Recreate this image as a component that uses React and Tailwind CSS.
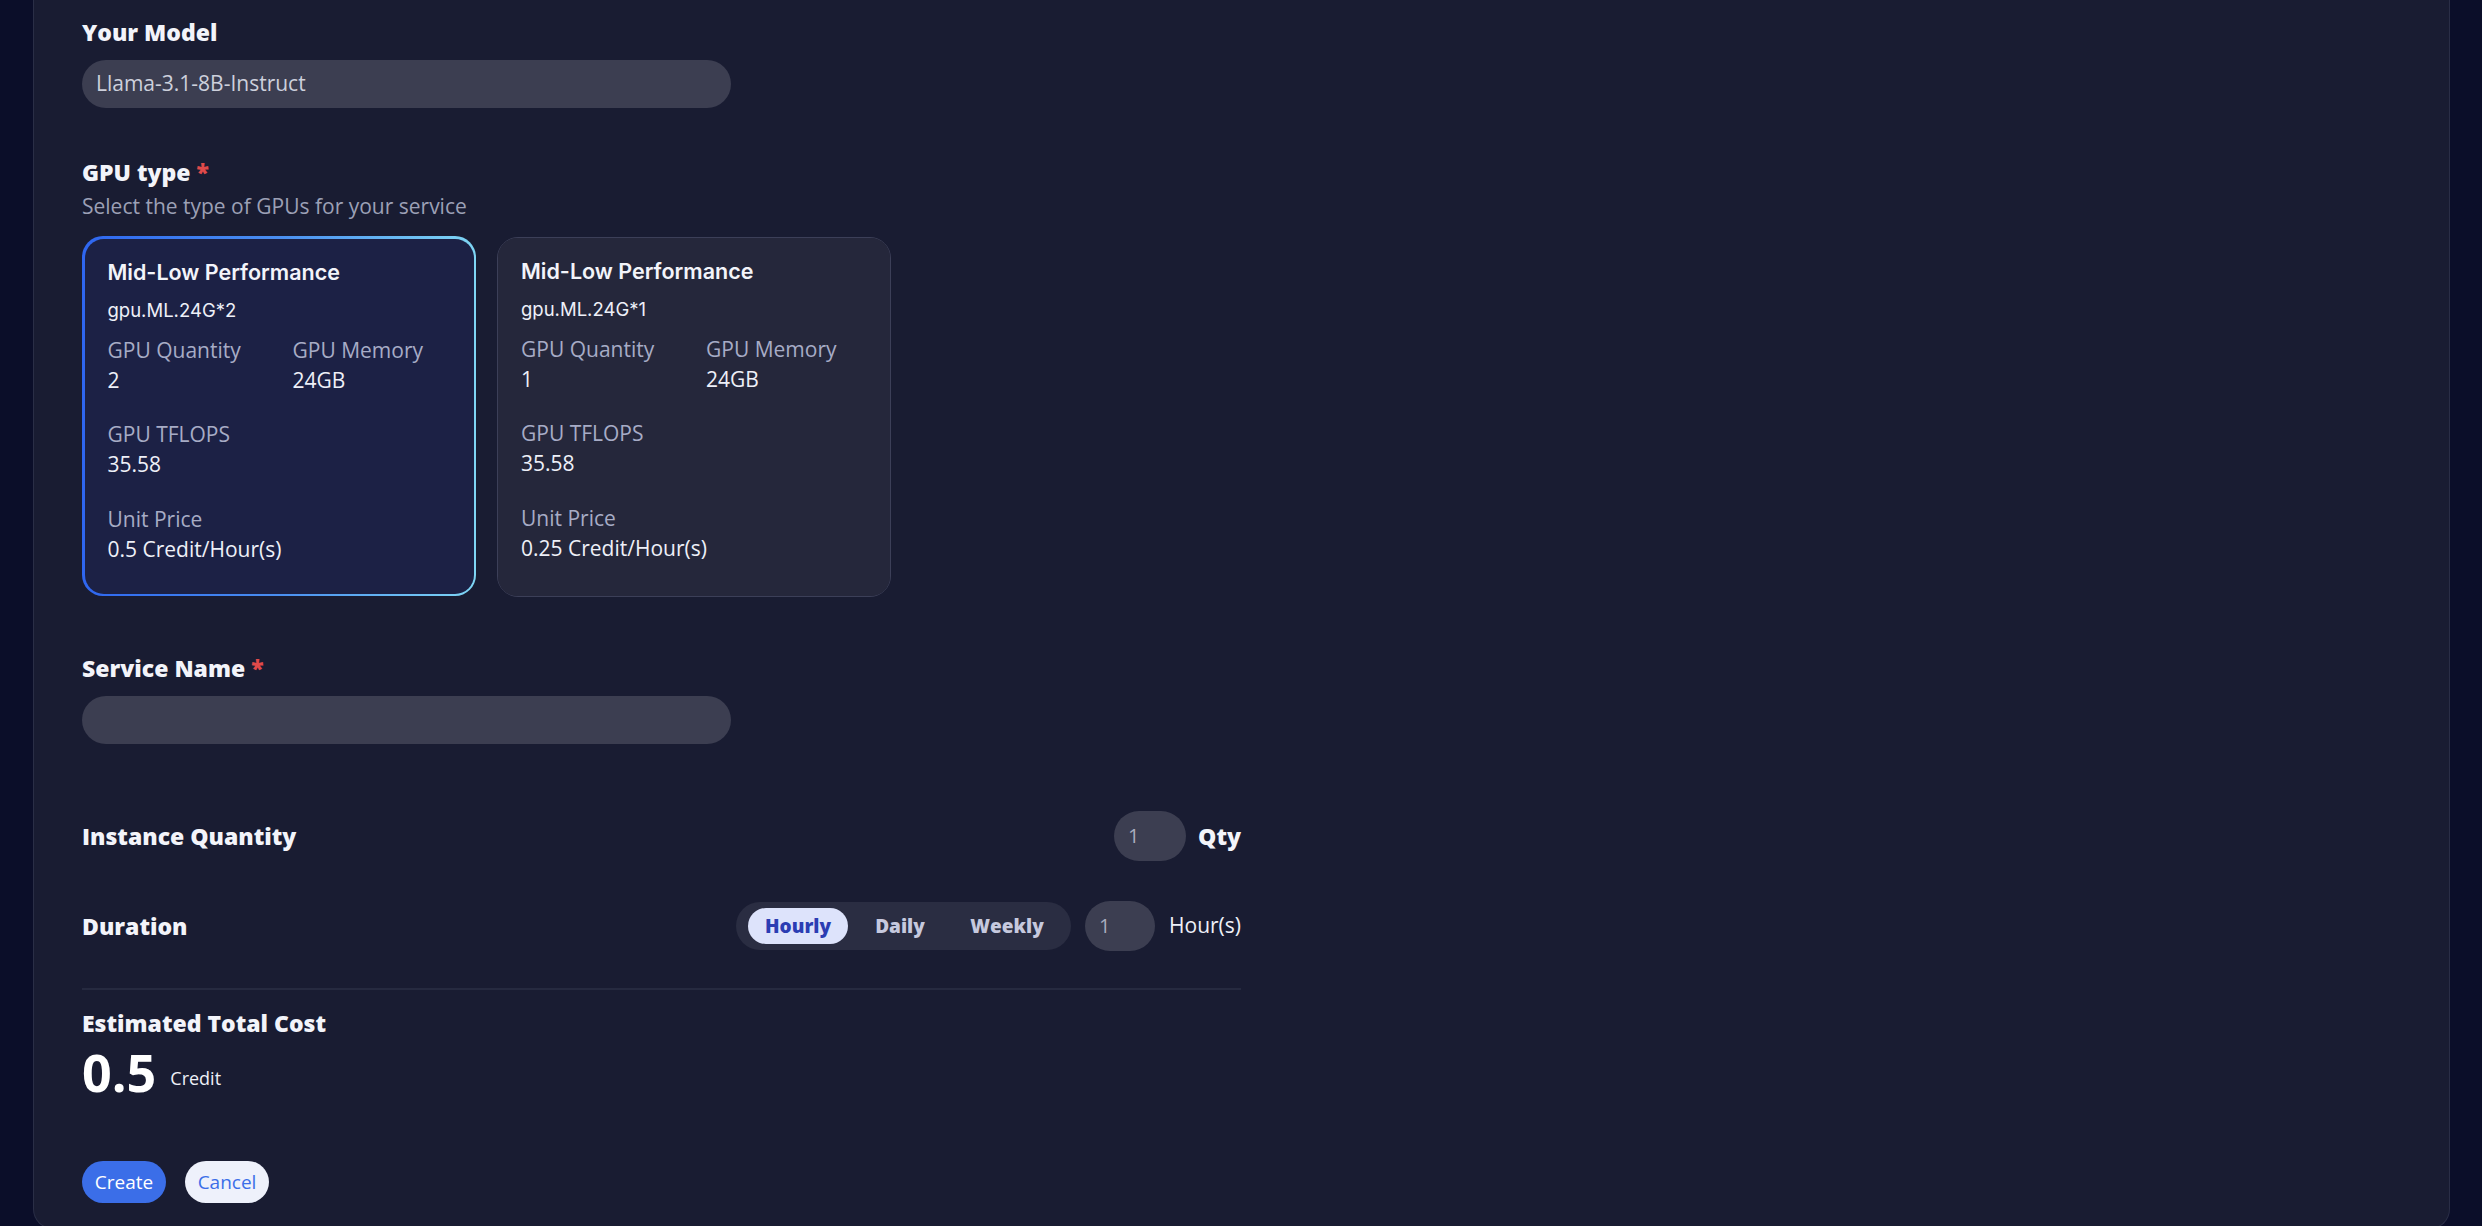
const sans = { fontFamily: '"Open Sans", "Noto Sans", sans-serif' };

function Label({ children, required }) {
  return (
    <div className="text-[23px] font-extrabold leading-[30px] text-[#f3f4fa]">
      {children}
      {required && <span className="ml-[6px] text-[#e04a4a]">*</span>}
    </div>
  );
}

function Spec({ label, value }) {
  return (
    <div className="flex flex-col">
      <span className="text-[21px] leading-[30px] text-[#a7acc6]">{label}</span>
      <span className="text-[21px] leading-[30px] text-[#eef0f8]">{value}</span>
    </div>
  );
}

function GpuCard({ code, qty, price, selected }) {
  const inner = (
    <div
      className={
        "flex h-full flex-col rounded-[19px] px-[23px] pt-[19px] " +
        (selected ? "bg-[#1c2145]" : "bg-[#25273b]")
      }
    >
      <div className="font-['Inter'] text-[21.5px] font-semibold leading-[28px] text-[#f3f4fa]">
        Mid-Low Performance
      </div>
      <div className="mt-[12px] font-['Inter'] text-[18.5px] leading-[24px] text-[#eef0f8]">{code}</div>
      <div className="mt-[13px] flex">
        <div className="w-[185px]">
          <Spec label="GPU Quantity" value={qty} />
        </div>
        <Spec label="GPU Memory" value="24GB" />
      </div>
      <div className="mt-[24px]">
        <Spec label="GPU TFLOPS" value="35.58" />
      </div>
      <div className="mt-[25px]">
        <Spec label="Unit Price" value={price} />
      </div>
    </div>
  );
  if (selected) {
    return (
      <div className="h-[360px] w-[394px] rounded-[21px] bg-gradient-to-r from-[#2f66f0] via-[#4a8ef0] to-[#7fd6f4] p-[2.5px]">
        {inner}
      </div>
    );
  }
  return (
    <div className="mt-[1px] h-[360px] w-[394px] rounded-[21px] border-[1.5px] border-[#3c3f58] bg-[#25273b]">{inner}</div>
  );
}

function Pill({ value, w = "w-[72px]" }) {
  return (
    <div className={"flex h-[50px] items-center rounded-full bg-[#3c3e51] pl-[14px] text-[20px] text-[#a9acbd] " + w}>
      {value}
    </div>
  );
}

export default function App() {
  return (
    <div className="flex h-[1226px] w-full overflow-hidden bg-[#0b0e29] pl-[33px] pr-[32px]" style={sans}>
      <div className="min-h-[1229px] flex-1 rounded-b-[20px] border-x border-b border-[#2a2e46] bg-[#191c32] pl-[48px] pt-[17px]">
        <div className="w-[1159px]">
          <Label>Your Model</Label>
          <div className="mt-[13px] flex h-[48px] w-[649px] items-center rounded-full bg-[#3c3e51] px-[14px] text-[21px] text-[#cdd0dc]">
            Llama-3.1-8B-Instruct
          </div>

          <div className="mt-[49px]">
            <Label required>GPU type</Label>
          </div>
          <div className="mt-[5px] text-[21px] leading-[28px] text-[#9ca0b6]">Select the type of GPUs for your service</div>
          <div className="mt-[16px] flex items-start gap-[21px]">
            <GpuCard code="gpu.ML.24G*2" qty="2" price="0.5 Credit/Hour(s)" selected />
            <GpuCard code="gpu.ML.24G*1" qty="1" price="0.25 Credit/Hour(s)" />
          </div>

          <div className="mt-[56px]">
            <Label required>Service Name</Label>
          </div>
          <div className="mt-[13px] h-[48px] w-[649px] rounded-full bg-[#3c3e51]" />

          <div className="mt-[67px] flex items-center justify-between">
            <Label>Instance Quantity</Label>
            <div className="flex items-center gap-[12px]">
              <Pill value="1" />
              <span className="text-[23px] font-extrabold text-[#f3f4fa]">Qty</span>
            </div>
          </div>

          <div className="mt-[40px] flex items-center justify-between">
            <Label>Duration</Label>
            <div className="flex items-center gap-[14px]">
              <div className="flex h-[48px] w-[335px] items-center gap-[8px] rounded-full bg-[#2a2d42] pl-[12px]">
                <span className="flex h-[36px] w-[100px] items-center justify-center rounded-full bg-[#dde3fb] text-[19px] font-extrabold text-[#2b3db3]">
                  Hourly
                </span>
                <span className="flex h-[36px] w-[88px] items-center justify-center text-[19px] font-extrabold text-[#c6c9de]">
                  Daily
                </span>
                <span className="flex h-[36px] w-[110px] items-center justify-center text-[19px] font-extrabold text-[#c6c9de]">
                  Weekly
                </span>
              </div>
              <Pill value="1" w="w-[70px]" />
              <span className="text-[21px] text-[#eef0f8]">Hour(s)</span>
            </div>
          </div>

          <div className="mt-[37px] h-[2px] bg-[#262a40]" />

          <div className="mt-[18px]">
            <Label>Estimated Total Cost</Label>
          </div>
          <div className="mt-[4px] flex items-center gap-[14px]">
            <span className="text-[52px] font-bold leading-[60px] text-white">0.5</span>
            <span className="pt-[12px] text-[18px] text-[#eef0f8]">Credit</span>
          </div>

          <div className="mt-[59px] flex gap-[19px]">
            <button className="h-[42px] w-[84px] rounded-full bg-[#3b6ee8] text-[19px] text-white">Create</button>
            <button className="h-[42px] w-[84px] rounded-full bg-[#eef1fb] text-[19px] text-[#3b6ee8]">Cancel</button>
          </div>
        </div>
      </div>
    </div>
  );
}
